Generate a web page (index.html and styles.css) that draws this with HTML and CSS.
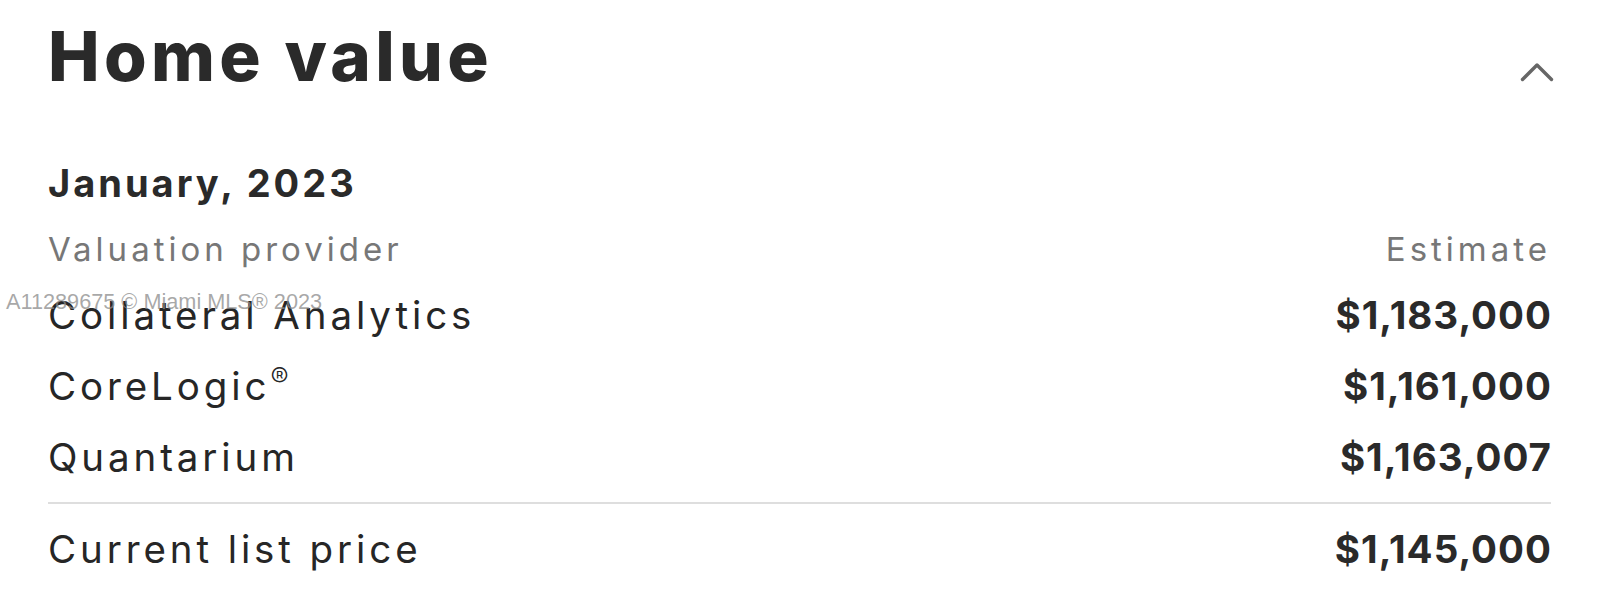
FILE: index.html
```html
<!DOCTYPE html>
<html>
<head>
	<meta charset="utf-8">
	<title>Home value</title>
	<link rel="stylesheet" href="styles.css">
</head>
<body>
	<div class="panel">
		<div class="panel-head">
			<h1 class="panel-title">Home value</h1>
			<svg class="chevron" width="36" height="24" viewBox="0 0 36 24">
				<path d="M3.5 19.5 L18 5 L32.5 19.5" fill="none" stroke="#666" stroke-width="3.4" stroke-linecap="round" stroke-linejoin="round"/>
			</svg>
		</div>

		<h2 class="period">January, 2023</h2>

		<div class="row row-head">
			<span>Valuation provider</span>
			<span>Estimate</span>
		</div>
		<div class="row">
			<span class="name">Collateral Analytics</span>
			<span class="amount">$1,183,000</span>
		</div>
		<div class="row">
			<span class="name">CoreLogic<sup class="reg">®</sup></span>
			<span class="amount">$1,161,000</span>
		</div>
		<div class="row">
			<span class="name">Quantarium</span>
			<span class="amount">$1,163,007</span>
		</div>
		<div class="row row-total">
			<span class="name">Current list price</span>
			<span class="amount">$1,145,000</span>
		</div>
	</div>

	<div class="watermark">A11289675 © Miami MLS® 2023</div>
</body>
</html>
```

FILE: styles.css
```css
body {
	margin: 0;
	background: #fff;
	font-family: Inter, "Open Sans", sans-serif;
	color: #262626;
}

.panel {
	padding: 16px 49px 0 48px;
}

.panel-head {
	display: flex;
	justify-content: space-between;
	align-items: flex-start;
}

.panel-title {
	margin: 0;
	font-size: 69px;
	line-height: 80px;
	font-weight: 800;
	letter-spacing: 4.3px;
	color: #2a2a2a;
}

.chevron {
	margin-top: 44px;
	margin-right: -4px;
}

.period {
	margin: 62px 0 0;
	font-size: 38px;
	line-height: 50px;
	font-weight: 700;
	letter-spacing: 3px;
	color: #2a2a2a;
}

.row {
	display: flex;
	justify-content: space-between;
	font-size: 38.5px;
	line-height: 71px;
	font-weight: 400;
	letter-spacing: 3.9px;
}

.row-head {
	margin-top: 16px;
	margin-bottom: 6px;
	font-size: 33px;
	line-height: 50px;
	color: #777;
	letter-spacing: 4px;
}

.row-total {
	margin-top: 9px;
	padding-top: 10px;
	line-height: 70px;
	border-top: 2px solid #dedede;
}

.amount {
	font-weight: 700;
	letter-spacing: 1px;
	margin-right: -1px;
	color: #2a2a2a;
}

.reg {
	font-size: 27px;
	font-weight: 300;
	line-height: 0;
	vertical-align: 13px;
	letter-spacing: 0;
}

.watermark {
	position: absolute;
	left: 6px;
	top: 289px;
	font-family: "Liberation Sans", Arial, sans-serif;
	font-size: 21.7px;
	color: rgba(140, 140, 140, 0.75);
	white-space: nowrap;
}
```
